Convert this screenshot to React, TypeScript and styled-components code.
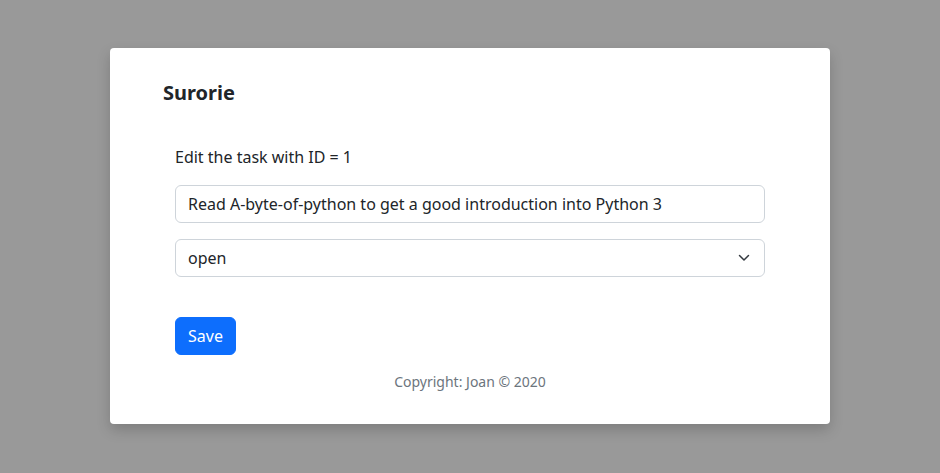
import React from "react";
import styled, { createGlobalStyle } from "styled-components";

const Global = createGlobalStyle`
  html, body { margin: 0; padding: 0; }
  body {
    background: #999999;
    font-family: "Noto Sans", "Open Sans", sans-serif;
    color: #212529;
    width: 940px;
    height: 473px;
    overflow: hidden;
  }
  * { box-sizing: border-box; }
`;

const Backdrop = styled.div`
  width: 940px;
  height: 473px;
  display: flex;
  justify-content: center;
  padding-top: 48px;
`;

const Card = styled.div`
  width: 720px;
  height: 376px;
  background: #fff;
  border-radius: 4px;
  box-shadow: 0 6px 14px rgba(0, 0, 0, 0.18);
  padding: 33px 65px 0 53px;
  display: flex;
  flex-direction: column;
`;

const Title = styled.h1`
  margin: 0;
  font-size: 20px;
  font-weight: 700;
  line-height: 24px;
`;

const Form = styled.form`
  display: flex;
  flex-direction: column;
  margin: 40px 0 0 12px;
`;

const Label = styled.label`
  font-size: 16px;
  line-height: 24px;
  margin-bottom: 16px;
`;

const Field = styled.input`
  height: 38px;
  width: 100%;
  border: 1px solid #ced4da;
  border-radius: 6px;
  padding: 6px 12px;
  font-family: inherit;
  font-size: 16px;
  color: #212529;
  margin-bottom: 16px;
  outline: none;
`;

const SelectWrap = styled.div`
  position: relative;
  margin-bottom: 40px;
`;

const Select = styled.select`
  appearance: none;
  height: 38px;
  width: 100%;
  border: 1px solid #ced4da;
  border-radius: 6px;
  padding: 6px 36px 6px 12px;
  font-family: inherit;
  font-size: 16px;
  color: #212529;
  background: #fff;
  outline: none;
`;

const Chevron = styled.svg`
  position: absolute;
  right: 15px;
  top: 15px;
  width: 12px;
  height: 8px;
  pointer-events: none;
`;

const Button = styled.button`
  align-self: flex-start;
  height: 38px;
  padding: 6px 12px;
  background: #0d6efd;
  color: #fff;
  border: 1px solid #0d6efd;
  border-radius: 6px;
  font-family: inherit;
  font-size: 16px;
  line-height: 24px;
`;

const Footer = styled.footer`
  text-align: center;
  color: #6c757d;
  font-size: 14px;
  line-height: 21px;
  margin-top: 16px;
  margin-left: 12px;
`;

export default function App() {
  return (
    <>
      <Global />
      <Backdrop>
        <Card>
          <Title>Surorie</Title>
          <Form onSubmit={(e) => e.preventDefault()}>
            <Label>Edit the task with ID = 1</Label>
            <Field defaultValue="Read A-byte-of-python to get a good introduction into Python 3" />
            <SelectWrap>
              <Select defaultValue="open">
                <option value="open">open</option>
                <option value="closed">closed</option>
              </Select>
              <Chevron viewBox="0 0 12 8">
                <path
                  d="M1.5 1.5 6 6 10.5 1.5"
                  fill="none"
                  stroke="#343a40"
                  strokeWidth="1.5"
                  strokeLinecap="round"
                  strokeLinejoin="round"
                />
              </Chevron>
            </SelectWrap>
            <Button type="submit">Save</Button>
          </Form>
          <Footer>Copyright: Joan © 2020</Footer>
        </Card>
      </Backdrop>
    </>
  );
}
